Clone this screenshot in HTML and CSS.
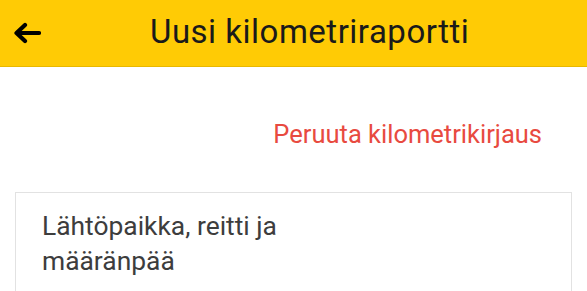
FILE: index.html
```html
<!DOCTYPE html>
<html lang="fi">
<head>
<meta charset="utf-8">
<link rel="stylesheet" href="styles.css">
</head>
<body>
<header class="toolbar">
  <button class="back" aria-label="Takaisin">
    <svg width="28" height="22" viewBox="0 0 28 22"><path d="M26 11H4M12 3L3.5 11L12 19" fill="none" stroke="#000" stroke-width="4.2" stroke-linecap="round" stroke-linejoin="round"/></svg>
  </button>
  <h1 class="title">Uusi kilometriraportti</h1>
</header>
<main class="content">
  <div class="cancel-row"><a class="cancel">Peruuta kilometrikirjaus</a></div>
  <section class="card">
    <p class="card-label">Lähtöpaikka, reitti ja<br>määränpää</p>
  </section>
</main>
</body>
</html>
```
FILE: styles.css
```css
html, body { margin: 0; padding: 0; background: #fff; }
body { font-family: Roboto, "Noto Sans", sans-serif; overflow: hidden; }
.toolbar {
  height: 67px;
  background: #ffcb05;
  display: flex;
  align-items: center;
  box-sizing: border-box;
  border-bottom: 1px solid #e8b800;
}
.back {
  background: none; border: 0; padding: 0;
  margin-left: 12px; width: 30px; height: 24px;
  display: flex; align-items: center; justify-content: center;
}
.title {
  margin: -2px 0 0 108px;
  font-size: 33px; font-weight: 400; color: #1a1a1a;
  line-height: 40px; letter-spacing: 0.5px;
}
.content { padding: 0 15px; }
.cancel-row {
  display: flex; justify-content: flex-end;
  padding: 50px 30px 0 0;
}
.cancel { color: #e84a40; font-size: 25.5px; line-height: 35px; }
.card {
  border: 1px solid #e2e2e2;
  margin-top: 40px;
  padding: 16px 26px;
}
.card-label {
  margin: 0;
  font-size: 26.4px; line-height: 35px; color: #3d3d3d;
}
```
